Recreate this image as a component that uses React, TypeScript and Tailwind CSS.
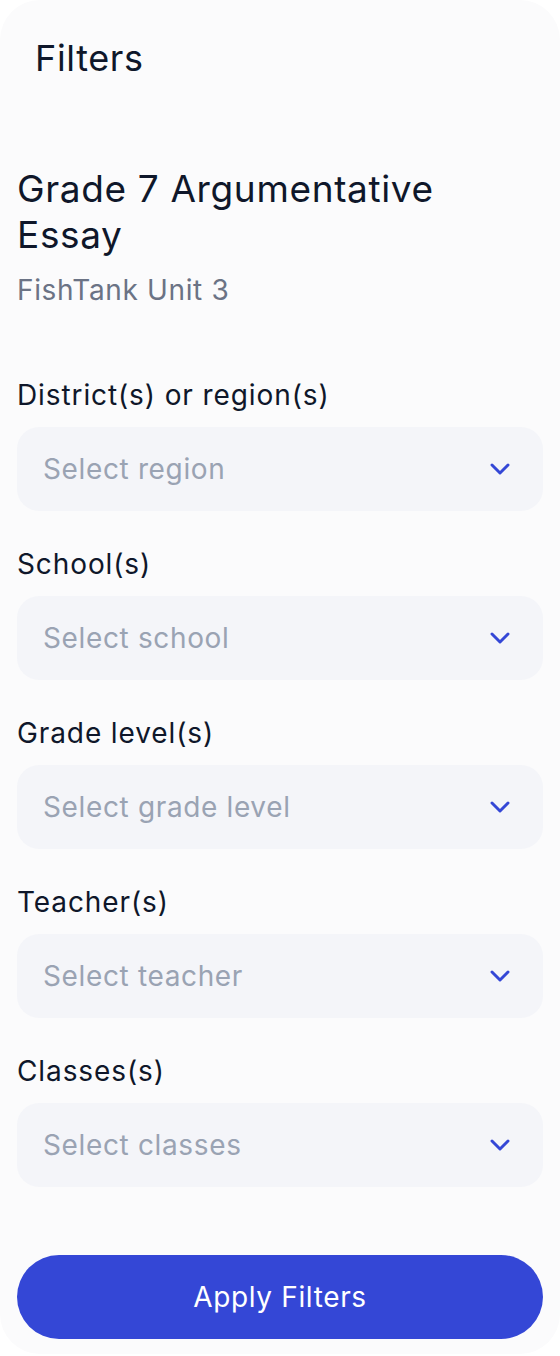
import { ChevronDown } from "lucide-react";

const filters = [
  { label: "District(s) or region(s)", placeholder: "Select region" },
  { label: "School(s)", placeholder: "Select school" },
  { label: "Grade level(s)", placeholder: "Select grade level" },
  { label: "Teacher(s)", placeholder: "Select teacher" },
  { label: "Classes(s)", placeholder: "Select classes" },
];

function FilterSelect({ label, placeholder }: { label: string; placeholder: string }) {
  return (
    <div className="flex flex-col">
      <label className="text-[28px] leading-[40px] tracking-[0.032em] text-[#0f172a]">{label}</label>
      <button
        type="button"
        className="mt-3 flex h-[84px] w-full items-center justify-between rounded-[22px] bg-[#f4f5f9] pl-[26px] pr-[27px] text-left"
      >
        <span className="text-[28px] text-[#9aa3b3]">{placeholder}</span>
        <ChevronDown className="h-8 w-8 text-[#3447d6]" strokeWidth={2.2} />
      </button>
    </div>
  );
}

export default function App() {
  return (
    <div
      className="min-h-screen bg-white tracking-[0.04em]"
      style={{ fontFamily: "Inter, 'Noto Sans', sans-serif" }}
    >
      <div className="flex flex-col rounded-[40px] bg-[#fbfbfc] px-[17px] pb-[15px]">
        {/* Header */}
        <h2 className="pl-[18px] pt-9 text-[36px] leading-[44px] text-[#0f172a]">Filters</h2>

        {/* Assignment */}
        <div className="mt-[86px]">
          <h1 className="max-w-[470px] text-[37px] leading-[46px] text-[#0f172a]">
            Grade 7 Argumentative Essay
          </h1>
          <p className="mt-3 text-[28px] leading-[40px] text-[#6b7385]">FishTank Unit 3</p>
        </div>

        {/* Selects */}
        <div className="mt-[65px] flex flex-col gap-[33px]">
          {filters.map((f) => (
            <FilterSelect key={f.label} label={f.label} placeholder={f.placeholder} />
          ))}
        </div>

        {/* Submit */}
        <button
          type="button"
          className="mt-[68px] h-[84px] w-full rounded-full bg-[#3447d6] text-[28px] text-white"
        >
          Apply Filters
        </button>
      </div>
    </div>
  );
}
